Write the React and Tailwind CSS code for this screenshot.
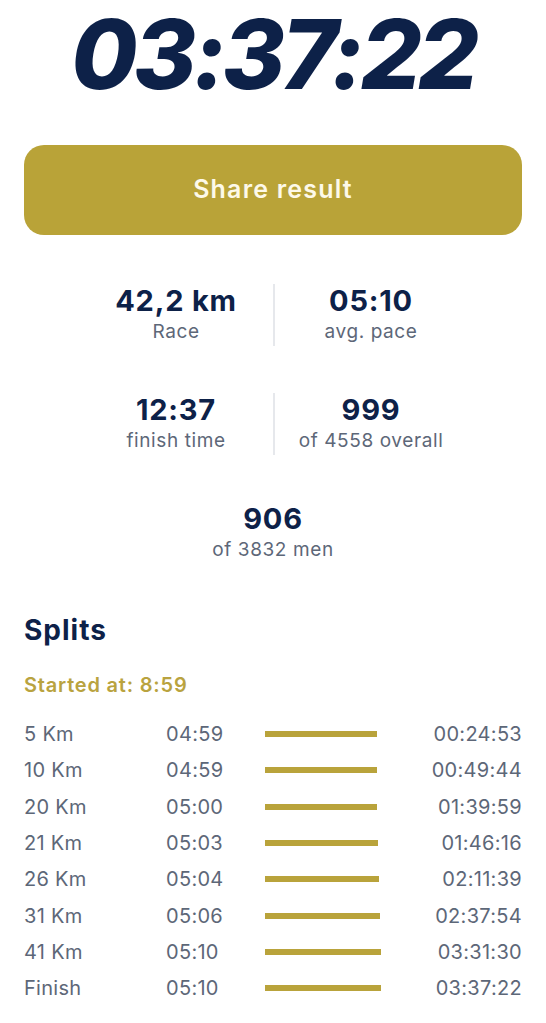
import React from 'react';

const splits = [
  { label: '5 Km', pace: '04:59', secs: 299, time: '00:24:53' },
  { label: '10 Km', pace: '04:59', secs: 299, time: '00:49:44' },
  { label: '20 Km', pace: '05:00', secs: 300, time: '01:39:59' },
  { label: '21 Km', pace: '05:03', secs: 303, time: '01:46:16' },
  { label: '26 Km', pace: '05:04', secs: 304, time: '02:11:39' },
  { label: '31 Km', pace: '05:06', secs: 306, time: '02:37:54' },
  { label: '41 Km', pace: '05:10', secs: 310, time: '03:31:30' },
  { label: 'Finish', pace: '05:10', secs: 310, time: '03:37:22' },
];

const maxSecs = Math.max(...splits.map(s => s.secs));

const Stat = ({ value, label, divider }) => (
  <div className={`flex flex-col items-center h-[62px] ${divider ? 'border-l-2 border-[#e6e8ec]' : ''}`}>
    <div className="text-[29px] leading-[34px] font-bold tracking-[0.8px] text-[#0d2148]">{value}</div>
    <div className="text-[19px] leading-[28px] text-[#5d6778] tracking-[0.6px]">{label}</div>
  </div>
);

export default function App() {
  return (
    <div className="w-[546px] min-h-[1023px] bg-white" style={{ fontFamily: 'Inter, "Noto Sans", sans-serif' }}>
      {/* Total time */}
      <div className="text-center text-[96px] leading-[108px] font-extrabold italic tracking-[-4px] text-[#0d2148]">
        03:37:22
      </div>

      {/* Share button */}
      <div className="px-6 mt-[37px]">
        <button className="w-full h-[90px] rounded-[20px] bg-[#b9a338] text-[#fdf9e9] text-[25px] font-semibold tracking-[1.2px]">
          Share result
        </button>
      </div>

      {/* Stats */}
      <div className="w-[388px] mx-auto mt-[49px] flex flex-col gap-[47px]">
        <div className="grid grid-cols-2">
          <Stat value="42,2 km" label="Race" />
          <Stat value="05:10" label="avg. pace" divider />
        </div>
        <div className="grid grid-cols-2">
          <Stat value="12:37" label="finish time" />
          <Stat value="999" label="of 4558 overall" divider />
        </div>
        <div className="flex justify-center">
          <Stat value="906" label="of 3832 men" />
        </div>
      </div>

      {/* Splits */}
      <div className="px-6 mt-[50px]">
        <h2 className="text-[28px] leading-[32px] font-bold tracking-[1px] text-[#0d2148]">Splits</h2>
        <div className="mt-[25px] text-[20px] leading-[28px] font-semibold tracking-[0.8px] text-[#b9a33f]">Started at: 8:59</div>
        <div className="mt-[17px]">
          {splits.map(s => (
            <div key={s.label} className="flex items-center h-[36.3px] text-[20px] tracking-[0.3px] text-[#5d6778]">
              <div className="w-[142px]">{s.label}</div>
              <div className="w-[99px]">{s.pace}</div>
              <div className="w-[120px]">
                <div className="h-[6px] bg-[#b9a33b]" style={{ width: `${(s.secs / maxSecs) * 116}px` }} />
              </div>
              <div className="flex-1 text-right">{s.time}</div>
            </div>
          ))}
        </div>
      </div>
    </div>
  );
}
